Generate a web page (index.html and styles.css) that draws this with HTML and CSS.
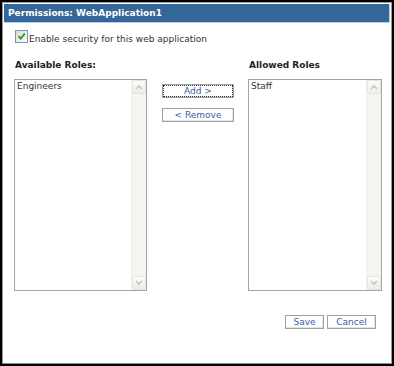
FILE: index.html
```html
<!DOCTYPE html>
<html>
<head>
  <title>Permissions: WebApplication1</title>
  <link rel="stylesheet" href="styles.css">
</head>
<body>
  <div class="dialog">
    <div class="frame">
      <!-- Title bar -->
      <div class="title">Permissions: WebApplication1</div>

      <div class="content">
        <label class="check">
          <span class="check-box">
            <svg width="11" height="11" viewBox="0 0 11 11">
              <path d="M2.5 5.2 L4.6 7.6 L8.8 2.6" fill="none" stroke="#21a121" stroke-width="1.8"/>
            </svg>
          </span>
          <span class="check-text">Enable security for this web application</span>
        </label>

        <div class="columns">
          <div class="col">
            <div class="col-label">Available Roles:</div>
            <div class="listbox">
              <div class="items">
                <div class="item">Engineers</div>
              </div>
              <div class="scroll">
                <div class="scroll-btn">
                  <svg width="8" height="6" viewBox="0 0 8 6"><path d="M1 5 L4 2 L7 5" fill="none" stroke="#c4c4c0" stroke-width="1.6"/></svg>
                </div>
                <div class="scroll-track"></div>
                <div class="scroll-btn">
                  <svg width="8" height="6" viewBox="0 0 8 6"><path d="M1 1 L4 4 L7 1" fill="none" stroke="#c4c4c0" stroke-width="1.6"/></svg>
                </div>
              </div>
            </div>
          </div>

          <div class="mid">
            <button class="btn btn-focus">Add &gt;</button>
            <button class="btn">&lt; Remove</button>
          </div>

          <div class="col col-right">
            <div class="col-label">Allowed Roles</div>
            <div class="listbox">
              <div class="items">
                <div class="item">Staff</div>
              </div>
              <div class="scroll">
                <div class="scroll-btn">
                  <svg width="8" height="6" viewBox="0 0 8 6"><path d="M1 5 L4 2 L7 5" fill="none" stroke="#c4c4c0" stroke-width="1.6"/></svg>
                </div>
                <div class="scroll-track"></div>
                <div class="scroll-btn">
                  <svg width="8" height="6" viewBox="0 0 8 6"><path d="M1 1 L4 4 L7 1" fill="none" stroke="#c4c4c0" stroke-width="1.6"/></svg>
                </div>
              </div>
            </div>
          </div>
        </div>

        <!-- Dialog actions -->
        <div class="actions">
          <button class="btn btn-save">Save</button>
          <button class="btn btn-cancel">Cancel</button>
        </div>
      </div>
    </div>
  </div>
</body>
</html>
```

FILE: styles.css
```css
/* Page reset */
html, body {
  margin: 0;
  padding: 0;
  background: #fff;
}

body {
  font-family: "DejaVu Sans", Verdana, sans-serif;
  font-size: 9px;
  line-height: 11px;
  color: #333;
}

/* Outer dialog frame */
.dialog {
  width: 394px;
  height: 366px;
  box-sizing: border-box;
  border: 2px solid #000;
}

.frame {
  height: 100%;
  box-sizing: border-box;
  border: 1px solid #9a9a9a;
  border-bottom-color: #8a8a8a;
  padding: 1px 1px 0 1px;
  background: #fff;
}

/* Title bar */
.title {
  height: 18px;
  line-height: 18px;
  padding-left: 4px;
  background-color: #336699;
  color: #fff;
  font-weight: bold;
  border-bottom: 1px solid #b6d0e8;
  border-right: 1px solid #b6d0e8;
}

.content {
  padding: 7px 8px 0 10px;
}

/* Checkbox row */
.check {
  display: flex;
  align-items: flex-start;
  height: 13px;
  margin-left: 1px;
}

.check-box {
  width: 11px;
  height: 11px;
  border: 1px solid #7a98b6;
  background: linear-gradient(135deg, #dcdcd6, #fbfbf9);
  display: flex;
}

.check-text {
  margin-top: 4px;
  margin-left: 1px;
}

/* Role columns */
.columns {
  display: flex;
  margin-top: 17px;
}

.col {
  width: 133px;
}

.col-right {
  width: 134px;
  margin-left: 14px;
}

.col-label {
  font-weight: bold;
  color: #222;
  padding-left: 1px;
  margin-bottom: 8px;
}

.listbox {
  height: 212px;
  box-sizing: border-box;
  border: 1px solid #a5a5a5;
  display: flex;
}

.items {
  flex-grow: 1;
  padding: 1px 2px;
}

.item {
  color: #333;
}

/* Fake scrollbar */
.scroll {
  width: 14px;
  display: flex;
  flex-direction: column;
  background-color: #f4f4f0;
  border-left: 1px solid #f0f0ec;
}

.scroll-track {
  flex-grow: 1;
}

.scroll-btn {
  height: 14px;
  box-sizing: border-box;
  border: 1px solid #e6e6e0;
  border-radius: 2px;
  background: linear-gradient(#fbfbf8, #eeeee8);
  display: flex;
  justify-content: center;
  align-items: center;
}

/* Middle buttons */
.mid {
  width: 72px;
  margin-left: 15px;
  padding-top: 24px;
  display: flex;
  flex-direction: column;
  gap: 10px;
}

.btn {
  height: 14px;
  box-sizing: border-box;
  padding: 0;
  margin: 0;
  border: 1px solid #a0a0a0;
  background: #fff;
  color: #3a5aa8;
  font-family: inherit;
  font-size: 9px;
  line-height: 12px;
  box-shadow: inset -1px -1px 0 #e4e4e4;
}

.btn-focus {
  outline: 1px dotted #333;
  outline-offset: -2px;
}

/* Save / Cancel */
.actions {
  display: flex;
  justify-content: flex-end;
  gap: 3px;
  margin-top: 24px;
  margin-right: 6px;
}

.btn-save {
  width: 39px;
}

.btn-cancel {
  width: 49px;
}
```
